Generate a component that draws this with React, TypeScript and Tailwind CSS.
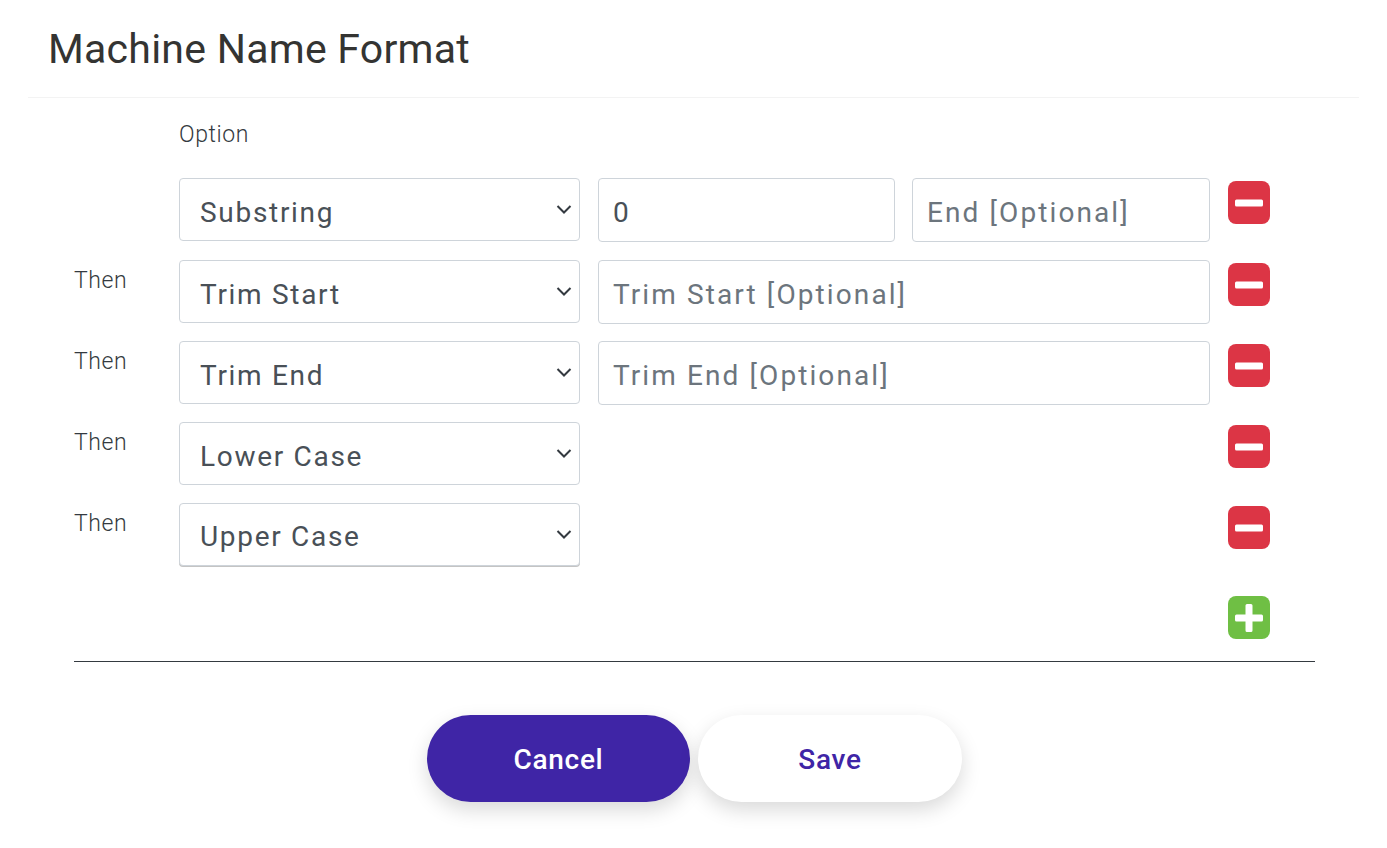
import React from "react";

const font = "[font-family:Roboto,'Liberation_Sans',sans-serif]";

function Chevron() {
  return (
    <svg className="pointer-events-none absolute right-[7px] top-[26px]" width="18" height="12" viewBox="0 0 18 12" fill="none">
      <path d="M2.5 2 L9 8.5 L15.5 2" stroke="#343a40" strokeWidth="2" />
    </svg>
  );
}

function Select({ value, last }: { value: string; last?: boolean }) {
  return (
    <div className="relative w-[401px] shrink-0">
      <select
        defaultValue={value}
        className={`h-[63px] w-full appearance-none rounded-[4px] border border-[#ced4da] bg-white pl-[20px] text-[28px] tracking-[1.7px] text-[#495057] outline-none ${last ? "pt-[4px] shadow-[0_1px_0_#c4c4c4]" : "pt-[6px]"}`}
      >
        <option>{value}</option>
      </select>
      <Chevron />
    </div>
  );
}

function Field({ className, placeholder, value }: { className: string; placeholder?: string; value?: string }) {
  return (
    <input
      readOnly
      defaultValue={value}
      placeholder={placeholder}
      className={`h-[64px] rounded-[4px] border border-[#ced4da] bg-white pl-[14px] pt-[4px] text-[28px] tracking-[2.1px] text-[#495057] outline-none placeholder:text-[#6c757d] ${className}`}
    />
  );
}

function IconButton({ kind }: { kind: "minus" | "plus" }) {
  const bg = kind === "minus" ? "bg-[#dc3545]" : "bg-[#6fbf44]";
  return (
    <button className={`mt-[3px] flex h-[43px] w-[42px] shrink-0 items-center justify-center rounded-[8px] ${bg}`}>
      <svg width="28" height="28" viewBox="0 0 28 28">
        {kind === "minus" ? (
          <rect x="0" y="10.5" width="28" height="7" rx="1.5" fill="#fff" />
        ) : (
          <path d="M10.5 1.5A1.5 1.5 0 0 1 12 0h4a1.5 1.5 0 0 1 1.5 1.5v9h9A1.5 1.5 0 0 1 28 12v4a1.5 1.5 0 0 1-1.5 1.5h-9v9A1.5 1.5 0 0 1 16 28h-4a1.5 1.5 0 0 1-1.5-1.5v-9h-9A1.5 1.5 0 0 1 0 16v-4a1.5 1.5 0 0 1 1.5-1.5h9z" fill="#fff" />
        )}
      </svg>
    </button>
  );
}

function Row({ label, mt, children }: { label?: string; mt: string; children: React.ReactNode }) {
  return (
    <div className={`flex items-start ${mt}`}>
      <div className="w-[105px] shrink-0 pt-[6px] text-[23px] font-light leading-[30px] tracking-[0.6px] text-[#343a40]">{label}</div>
      {children}
    </div>
  );
}

export default function App() {
  return (
    <div className={`h-[848px] w-full overflow-hidden bg-white ${font}`}>
      <div className="mx-[28px] flex h-[98px] items-center border-b border-[#f3f3f3] pl-[20px] pt-[2px]">
        <h1 className="text-[41px] font-normal leading-none tracking-[0.25px] text-[#343432]">Machine Name Format</h1>
      </div>
      <div className="pl-[74px] pr-[72px]">
        <div className="pl-[105px] pt-[22px] text-[23px] font-light leading-[30px] tracking-[0.6px] text-[#343a40]">Option</div>
        <Row mt="mt-[28px]">
          <Select value="Substring" />
          <Field className="ml-[18px] w-[297px]" value="0" />
          <Field className="ml-[17px] w-[298px]" placeholder="End [Optional]" />
          <div className="ml-[18px]"><IconButton kind="minus" /></div>
        </Row>
        <Row mt="mt-[18px]" label="Then">
          <Select value="Trim Start" />
          <Field className="ml-[18px] w-[612px]" placeholder="Trim Start [Optional]" />
          <div className="ml-[18px]"><IconButton kind="minus" /></div>
        </Row>
        <Row mt="mt-[17px]" label="Then">
          <Select value="Trim End" />
          <Field className="ml-[18px] w-[612px]" placeholder="Trim End [Optional]" />
          <div className="ml-[18px]"><IconButton kind="minus" /></div>
        </Row>
        <Row mt="mt-[17px]" label="Then">
          <Select value="Lower Case" />
          <div className="ml-[648px]"><IconButton kind="minus" /></div>
        </Row>
        <Row mt="mt-[18px]" label="Then">
          <Select value="Upper Case" last />
          <div className="ml-[648px]"><IconButton kind="minus" /></div>
        </Row>
        <div className="mt-[30px] pl-[1154px]"><IconButton kind="plus" /></div>
        <div className="mt-[22px] border-t border-[#343a40]" />
        <div className="mt-[53px] flex justify-center gap-[8px]">
          <button className="h-[87px] w-[263px] rounded-full bg-[#3f25a6] pt-[3px] text-[28px] font-medium tracking-[0.7px] text-white shadow-[0_8px_20px_rgba(0,0,0,0.15)]">Cancel</button>
          <button className="h-[87px] w-[264px] rounded-full bg-white pt-[3px] text-[28px] font-medium tracking-[0.7px] text-[#3f25a6] shadow-[0_8px_20px_rgba(0,0,0,0.15)]">Save</button>
        </div>
      </div>
    </div>
  );
}
